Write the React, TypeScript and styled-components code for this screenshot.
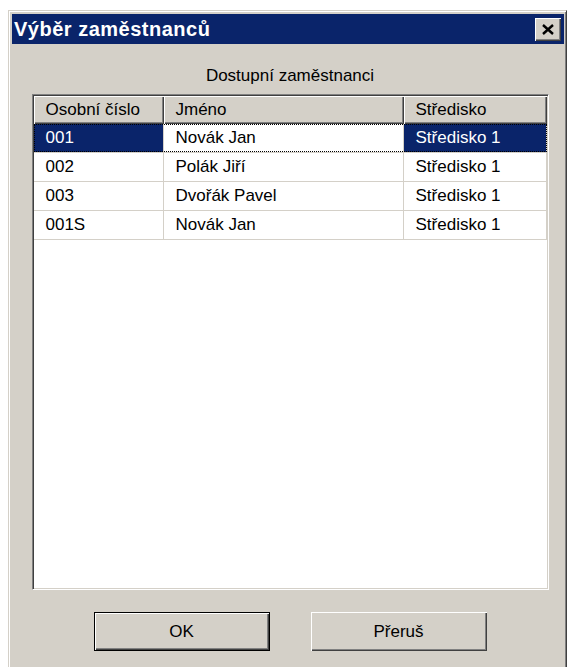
import React from 'react';
import styled, { createGlobalStyle } from 'styled-components';

const face = '#d4d0c8';
const navy = '#0a246a';

const GlobalStyle = createGlobalStyle`
  html, body {
    margin: 0;
    padding: 0;
    background: #ffffff;
    overflow: hidden;
  }
  body {
    font-family: 'Liberation Sans', Arial, sans-serif;
  }
`;

const Page = styled.div`
  padding: 10px 0 0 8px;
`;

const Window = styled.div`
  width: 559px;
  height: 680px;
  box-sizing: border-box;
  background: ${face};
  border-top: 1px solid ${face};
  border-left: 1px solid ${face};
  border-right: 1px solid #404040;
  box-shadow: inset 1px 1px 0 #ffffff, inset -1px 0 0 #808080;
  padding: 3px 2px 0 3px;
  display: flex;
  flex-direction: column;
`;

const TitleBar = styled.div`
  height: 30px;
  background: ${navy};
  color: #ffffff;
  display: flex;
  align-items: center;
  justify-content: space-between;
  padding: 0 3px 0 2px;
`;

const Title = styled.span`
  font-size: 20px;
  font-weight: bold;
  letter-spacing: 0.5px;
`;

const CloseButton = styled.button`
  width: 26px;
  height: 23px;
  padding: 0;
  margin: 0;
  background: ${face};
  border: none;
  box-shadow: inset 1px 1px 0 #ffffff, inset -1px -1px 0 #404040,
    inset -2px -2px 0 #808080;
  display: flex;
  align-items: center;
  justify-content: center;
`;

const Body = styled.div`
  display: flex;
  flex-direction: column;
  align-items: center;
  padding-left: 4px;
`;

const Caption = styled.div`
  margin-top: 22px;
  height: 20px;
  line-height: 20px;
  font-size: 17px;
  color: #000000;
`;

const ListView = styled.div`
  margin-top: 8px;
  width: 517px;
  height: 496px;
  box-sizing: border-box;
  background: #ffffff;
  border-top: 1px solid #808080;
  border-left: 1px solid #808080;
  border-right: 1px solid #ffffff;
  border-bottom: 1px solid #ffffff;
  box-shadow: inset 1px 1px 0 #404040, inset -1px -1px 0 ${face};
  padding: 1px 1px 1px 1px;
`;

const columns = '130px 240px 1fr';

const HeaderRow = styled.div`
  display: grid;
  grid-template-columns: ${columns};
  height: 28px;
`;

const HeaderCell = styled.div`
  background: ${face};
  box-shadow: inset 1px 1px 0 #ffffff, inset -1px -1px 0 #404040,
    inset -2px -2px 0 #808080;
  font-size: 17px;
  line-height: 27px;
  padding-left: 12px;
  color: #000000;
  white-space: nowrap;
  overflow: hidden;
`;

const Row = styled.div`
  position: relative;
  display: grid;
  grid-template-columns: ${columns};
  height: 29px;

  &::after {
    content: '';
    display: ${(p: { $selected?: boolean }) => (p.$selected ? 'block' : 'none')};
    position: absolute;
    inset: 0 0 1px 0;
    border: 1px dotted #000000;
    pointer-events: none;
  }
`;

const Cell = styled.div<{ $highlight?: boolean }>`
  background: ${(p) => (p.$highlight ? navy : '#ffffff')};
  color: ${(p) => (p.$highlight ? '#ffffff' : '#000000')};
  border-right: 1px solid ${face};
  border-bottom: 1px solid ${face};
  font-size: 17px;
  line-height: 28px;
  padding-left: 12px;
  white-space: nowrap;
  overflow: hidden;
`;

const ButtonRow = styled.div`
  margin-top: 22px;
  display: flex;
  gap: 41px;
`;

const Button = styled.button<{ $default?: boolean }>`
  width: 176px;
  height: 39px;
  background: ${face};
  font-family: 'Liberation Sans', Arial, sans-serif;
  font-size: 17px;
  color: #000000;
  padding: 0;
  border: ${(p) => (p.$default ? '1px solid #000000' : 'none')};
  box-shadow: inset 1px 1px 0 #ffffff, inset -1px -1px 0 #404040,
    inset -2px -2px 0 #808080;
`;

const employees = [
  { id: '001', name: 'Novák Jan', centre: 'Středisko 1' },
  { id: '002', name: 'Polák Jiří', centre: 'Středisko 1' },
  { id: '003', name: 'Dvořák Pavel', centre: 'Středisko 1' },
  { id: '001S', name: 'Novák Jan', centre: 'Středisko 1' },
];

const CloseIcon = () => (
  <svg width="12" height="11" viewBox="0 0 12 11">
    <path d="M1 1 L11 10 M11 1 L1 10" stroke="#000" strokeWidth="2.4" />
  </svg>
);

const App = () => {
  const selected = 0;

  return (
    <Page>
      <GlobalStyle />
      <Window>
        <TitleBar>
          <Title>Výběr zaměstnanců</Title>
          <CloseButton>
            <CloseIcon />
          </CloseButton>
        </TitleBar>
        <Body>
          <Caption>Dostupní zaměstnanci</Caption>
          <ListView>
            <HeaderRow>
              <HeaderCell>Osobní číslo</HeaderCell>
              <HeaderCell>Jméno</HeaderCell>
              <HeaderCell>Středisko</HeaderCell>
            </HeaderRow>
            {employees.map((e, i) => (
              <Row key={e.id} $selected={i === selected}>
                <Cell $highlight={i === selected}>{e.id}</Cell>
                <Cell>{e.name}</Cell>
                <Cell $highlight={i === selected}>{e.centre}</Cell>
              </Row>
            ))}
          </ListView>
          <ButtonRow>
            <Button $default>OK</Button>
            <Button>Přeruš</Button>
          </ButtonRow>
        </Body>
      </Window>
    </Page>
  );
};

export default App;
